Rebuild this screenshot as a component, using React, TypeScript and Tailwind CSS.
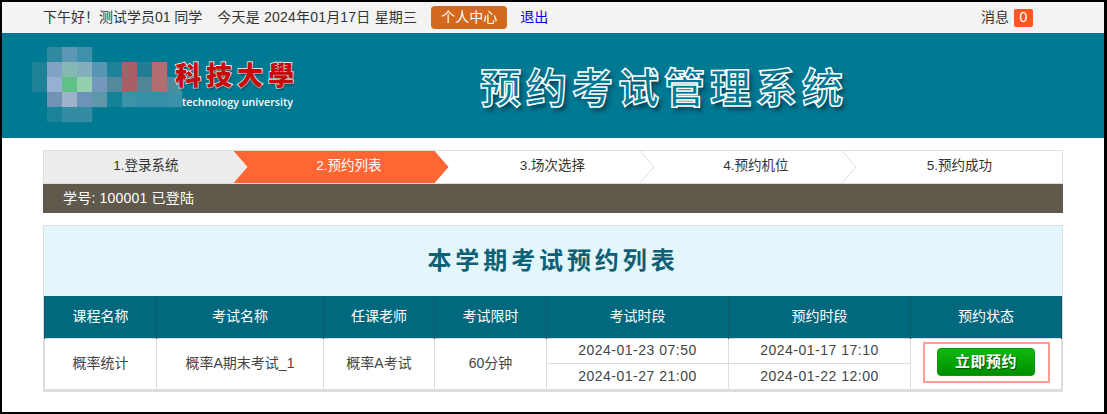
const mosaic: [number, number, string][] = [
  [47,47,"#2f8aa0"],[62,47,"#5c97b5"],[77,47,"#3f90aa"],
  [32,62,"#1e8198"],[47,62,"#80a3c4"],[62,62,"#85b8b2"],[77,62,"#84aebb"],[92,62,"#5795b2"],[107,62,"#1f8299"],[122,62,"#a95f66"],[137,62,"#217e94"],[152,62,"#b26d70"],
  [32,77,"#1e8198"],[47,77,"#95b0d0"],[62,77,"#60c186"],[77,77,"#94d0ae"],[92,77,"#7498bd"],[107,77,"#53899a"],[122,77,"#a95f66"],[137,77,"#528496"],[152,77,"#b26d70"],[167,77,"#4c8c9c"],
  [47,92,"#6f94b5"],[62,92,"#9cb3c9"],[77,92,"#6c94b8"],[92,92,"#5c98a9"],[107,92,"#13839a"],[122,92,"#3b93a8"],[137,92,"#3490a6"],[152,92,"#3490a6"],[167,92,"#3a92a8"],
  [47,107,"#1a8299"],[62,107,"#338ca2"],[77,107,"#338ca2"],
];

function Step({ label, w, kind, z }: { label: string; w: string; kind: "done" | "active" | "todo"; z: string }) {
  return (
    <div className={`relative flex h-full items-center justify-center pb-[2px] ${w} ${z} ${kind === "active" ? "text-white" : "text-[#333]"}`}>
      {kind === "done" && <span className="absolute inset-y-0 left-0 right-[14px] bg-[#ededed]" />}
      {kind === "active" && <span className="absolute inset-y-0 left-[-14px] right-[14px] bg-[#ff6633]" />}
      <svg className="absolute right-0 top-0 h-[32px] w-[15px]" viewBox="0 0 15 32" preserveAspectRatio="none">
        <polygon points="0,0 14,16 0,32" fill={kind === "done" ? "#ededed" : kind === "active" ? "#ff6633" : "#ffffff"} />
        <polyline points="0,0 14,16 0,32" fill="none" stroke={kind === "todo" ? "#dddddd" : "#f5f5f5"} strokeWidth="1" />
      </svg>
      <span className="relative">{label}</span>
    </div>
  );
}

const th = "border-x border-[#14586a] font-normal";
const td = "border border-[#dddddd] text-center text-[14px] text-[#444]";

export default function App() {
  return (
    <div className="h-[414px] w-[1107px] overflow-hidden border-b-2 border-l-2 border-r-[3px] border-t-2 border-black bg-white font-['Liberation_Sans','Noto_Sans_CJK_SC',sans-serif] text-[14px] text-[#333]">
      <div className="flex h-[31px] items-center bg-[#f3f3f3] pl-[41px] pr-[71px]">
        <span>下午好！<span className="-ml-[4px]"> 测试学员01 同学</span></span>
        <span className="ml-[15px] tracking-[0.2px]">今天是 2024年01月17日 星期三</span>
        <span className="ml-[14px] flex h-[23px] w-[76px] items-center justify-center rounded-[4px] bg-[#d2691e] text-white">个人中心</span>
        <a className="ml-[13px] text-[#0000ee]">退出</a>
        <span className="ml-auto">消息</span>
        <span className="ml-[5px] flex h-[18px] w-[19px] items-center justify-center rounded-[2px] bg-[#ff5722] text-white">0</span>
      </div>

      <div className="flex h-[105px] items-start bg-[#007993]">
        <div className="relative h-[105px] w-[478px] shrink-0">
          <svg className="absolute left-0 top-0" width="190" height="105" viewBox="0 33 190 105">
            {mosaic.map(([x, y, c]) => (
              <rect key={`${x}-${y}`} x={x - 2} y={y} width="15.2" height="15.2" fill={c} />
            ))}
          </svg>
          <div className="absolute left-[173px] top-[21px] whitespace-nowrap font-['Noto_Sans_CJK_TC',sans-serif] text-[26px] font-black leading-[40px] tracking-[5px] text-[#c80a0a] [-webkit-text-stroke:1.5px_#ffffff] [paint-order:stroke_fill] [text-shadow:1px_2px_2px_rgba(0,0,0,0.35)]">
            科技大學
          </div>
          <div className="absolute left-[180px] top-[61px] whitespace-nowrap font-['Open_Sans',sans-serif] text-[10.7px] font-semibold leading-[16px] text-white">
            technology university
          </div>
        </div>
        <div className="mt-[23px] whitespace-nowrap font-['Noto_Sans_CJK_SC',sans-serif] text-[41px] font-bold leading-[58px] tracking-[5px] text-[#007993] [-webkit-text-stroke:1.5px_#ffffff] [text-shadow:3px_4px_4px_rgba(0,40,55,0.65)]">
          预约考试管理系统
        </div>
      </div>

      <div className="mx-[41px] mt-[12px] w-[1020px] text-[13.5px]">
        <div className="flex h-[34px] border border-[#dddddd] bg-white">
          <Step label="1.登录系统" w="w-[204px]" kind="done" z="z-50" />
          <Step label="2.预约列表" w="w-[202px]" kind="active" z="z-40" />
          <Step label="3.场次选择" w="w-[205px]" kind="todo" z="z-30" />
          <Step label="4.预约机位" w="w-[202px]" kind="todo" z="z-20" />
          <div className="flex w-[205px] items-center justify-center pb-[2px]">5.预约成功</div>
        </div>
        <div className="flex h-[29px] items-center bg-[#605a4d] pb-[1px] pl-[20px] text-[14px] tracking-[0.2px] text-white">学号: 100001 已登陆</div>

        <div className="mt-[12px] border-x border-b-2 border-t border-[#dddddd] text-[14px]">
          <div className="flex h-[70px] items-center justify-center bg-[#e3f6fb] text-[24px] font-bold tracking-[3.9px] text-[#0e6075]">
            本学期考试预约列表
          </div>
          <table className="w-full table-fixed border-collapse">
            <colgroup>
              <col className="w-[112px]" />
              <col className="w-[167px]" />
              <col className="w-[111px]" />
              <col className="w-[112px]" />
              <col className="w-[182px]" />
              <col className="w-[182px]" />
              <col />
            </colgroup>
            <thead>
              <tr className="h-[42px] bg-[#02687d] text-center text-white">
                <th className={th}>课程名称</th>
                <th className={th}>考试名称</th>
                <th className={th}>任课老师</th>
                <th className={th}>考试限时</th>
                <th className={th}>考试时段</th>
                <th className={th}>预约时段</th>
                <th className={th}>预约状态</th>
              </tr>
            </thead>
            <tbody>
              <tr className="h-[25px]">
                <td className={td} rowSpan={2}>概率统计</td>
                <td className={td} rowSpan={2}>概率A期末考试_1</td>
                <td className={td} rowSpan={2}>概率A考试</td>
                <td className={td} rowSpan={2}>60分钟</td>
                <td className={`${td} tracking-[0.5px]`}>2024-01-23 07:50</td>
                <td className={`${td} tracking-[0.5px]`}>2024-01-17 17:10</td>
                <td className={`${td} align-top pt-[3px]`} rowSpan={2}>
                  <div className="mx-auto flex h-[41px] w-[127px] items-center justify-center border-2 border-[#ff9d90]">
                    <button className="h-[28px] w-[98px] rounded-[4px] border border-[#0a9a0a] bg-gradient-to-b from-[#0fb80f] to-[#008f00] text-[15px] font-bold tracking-[0.5px] text-white [text-shadow:1px_1px_1px_rgba(0,0,0,0.5)]">
                      立即预约
                    </button>
                  </div>
                </td>
              </tr>
              <tr className="h-[26px]">
                <td className={`${td} tracking-[0.5px]`}>2024-01-27 21:00</td>
                <td className={`${td} tracking-[0.5px]`}>2024-01-22 12:00</td>
              </tr>
            </tbody>
          </table>
        </div>
      </div>
    </div>
  );
}
